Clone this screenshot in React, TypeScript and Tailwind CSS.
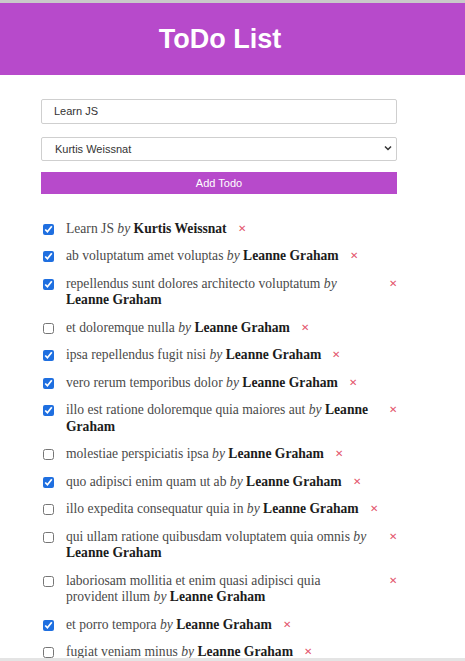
import React from 'react'

type Todo = { title: string; user: string; done: boolean }

const todos: Todo[] = [
  { title: 'Learn JS', user: 'Kurtis Weissnat', done: true },
  { title: 'ab voluptatum amet voluptas', user: 'Leanne Graham', done: true },
  { title: 'repellendus sunt dolores architecto voluptatum', user: 'Leanne Graham', done: true },
  { title: 'et doloremque nulla', user: 'Leanne Graham', done: false },
  { title: 'ipsa repellendus fugit nisi', user: 'Leanne Graham', done: true },
  { title: 'vero rerum temporibus dolor', user: 'Leanne Graham', done: true },
  { title: 'illo est ratione doloremque quia maiores aut', user: 'Leanne Graham', done: true },
  { title: 'molestiae perspiciatis ipsa', user: 'Leanne Graham', done: false },
  { title: 'quo adipisci enim quam ut ab', user: 'Leanne Graham', done: true },
  { title: 'illo expedita consequatur quia in', user: 'Leanne Graham', done: false },
  { title: 'qui ullam ratione quibusdam voluptatem quia omnis', user: 'Leanne Graham', done: false },
  { title: 'laboriosam mollitia et enim quasi adipisci quia provident illum', user: 'Leanne Graham', done: false },
  { title: 'et porro tempora', user: 'Leanne Graham', done: true },
  { title: 'fugiat veniam minus', user: 'Leanne Graham', done: false },
  { title: 'et quia', user: 'Leanne Graham', done: false },
]

function TodoItem({ todo }: { todo: Todo }) {
  // long titles wrap onto a second line, the × then sits at the right edge
  const wraps = todo.title.length >= 40
  return (
    <li className="flex items-start">
      <input
        type="checkbox"
        defaultChecked={todo.done}
        className="w-[11px] h-[11px] mt-[3px] ml-[2px] mr-[12px] shrink-0 accent-[#1f6fe0]"
      />
      <span className="max-w-[306px] text-[13.6px] leading-[16.5px] text-[#4a4a4a] font-['Liberation_Serif',serif]">
        {todo.title} <i>by</i> <b className="text-[#1c1c1c]">{todo.user}</b>
      </span>
      <button
        className={
          (wraps ? 'ml-[18px] ' : 'ml-[11px] ') +
          "shrink-0 text-[10px] leading-[16.5px] text-[#e3546b] font-['Liberation_Sans',sans-serif]"
        }
      >
        ✕
      </button>
    </li>
  )
}

export default function App() {
  return (
    <div className="h-[661px] overflow-hidden bg-white border-t-[3px] border-[#c9c9c9] relative">
      <header className="h-[72px] bg-[#b74acb] flex items-center">
        <h1 className="w-[440px] text-center text-white text-[27px] font-bold font-['Liberation_Sans',sans-serif]">
          ToDo List
        </h1>
      </header>

      <div className="ml-[41px] w-[356px] pt-[23px] font-['Liberation_Sans',sans-serif]">
        <input
          defaultValue="Learn JS"
          className="w-full h-[25px] px-[12px] border border-[#cfcfcf] rounded-[2px] text-[11px] text-[#333]"
        />
        <div className="relative mt-[12px]">
          <select className="w-full h-[24px] pl-[13px] border border-[#cfcfcf] rounded-[2px] text-[11px] text-[#333] appearance-none bg-white">
            <option>Kurtis Weissnat</option>
            <option>Leanne Graham</option>
          </select>
          <svg className="absolute right-[5px] top-[9px]" width="8" height="6" viewBox="0 0 8 6">
            <path d="M1 1.5l3 3 3-3" stroke="#333" strokeWidth="1.5" fill="none" />
          </svg>
        </div>
        <button className="mt-[11px] w-full h-[22px] bg-[#b74acb] text-white text-[11px]">Add Todo</button>

        <ul className="mt-[27px] flex flex-col gap-[11px]">
          {todos.map((t, i) => (
            <TodoItem key={i} todo={t} />
          ))}
        </ul>
      </div>

      <div className="absolute bottom-0 left-0 right-0 h-[3px] bg-[#e4e4e4]" />
    </div>
  )
}
